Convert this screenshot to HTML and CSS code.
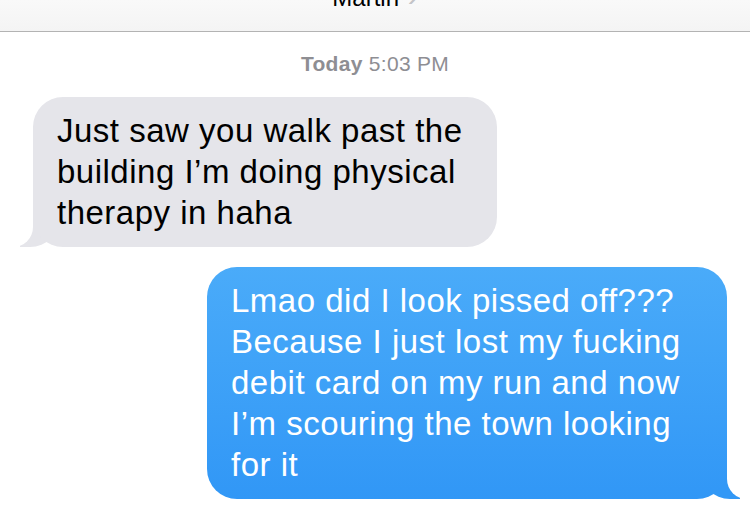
FILE: index.html
```html
<!DOCTYPE html>
<html lang="en">
<head>
    <meta charset="UTF-8">
    <meta name="viewport" content="width=device-width, initial-scale=1.0">
    <title>Martin</title>
    <link rel="stylesheet" href="styles.css">
</head>
<body>

<div class="header">
    <div class="contact">Martin <span class="chevron">&#8250;</span></div>
</div>

<div class="thread">
    <div class="stamp"><b>Today</b> 5:03 PM</div>

    <div class="row them">
        <div class="bubble gray">Just saw you walk past the building I&rsquo;m doing physical therapy in haha</div>
    </div>

    <div class="row me">
        <div class="bubble blue">Lmao did I look pissed off??? Because I just lost my fucking debit card on my run and now I&rsquo;m scouring the town looking for it</div>
    </div>
</div>

</body>
</html>
```

FILE: styles.css
```css
body {
    margin: 0;
    background: #ffffff;
    font-family: 'Liberation Sans', Arial, sans-serif;
    overflow: hidden;
}

.header {
    height: 31px;
    background: linear-gradient(180deg, #f9f9f9, #f4f4f4);
    border-bottom: 1px solid #b3b3b3;
    overflow: hidden;
    display: flex;
    justify-content: center;
}

.contact {
    margin-top: -18px;
    font-size: 24px;
    color: #000;
    line-height: 28px;
}

.chevron {
    color: #c4c4c7;
    font-size: 30px;
    margin-left: 2px;
}

.thread {
    padding-top: 20px;
}

.stamp {
    text-align: center;
    font-size: 21px;
    letter-spacing: 0.3px;
    color: #8e8e93;
    line-height: 24px;
    margin-bottom: 21px;
}

.stamp b {
    font-weight: bold;
}

.row {
    display: flex;
}

.row.them {
    padding-left: 33px;
    margin-bottom: 20px;
}

.row.me {
    justify-content: flex-end;
    padding-right: 23px;
}

.bubble {
    position: relative;
    font-size: 33px;
    letter-spacing: 0.5px;
    line-height: 41px;
    padding: 13px 24px 14px 24px;
    border-radius: 30px;
}

.gray {
    width: 416px;
    background: #e5e5ea;
    color: #000;
}

.blue {
    width: 472px;
    background: linear-gradient(180deg, #4aabf9, #3197f6);
    color: #fff;
}

/* tails */
.gray::before {
    content: "";
    position: absolute;
    bottom: 0;
    left: -13px;
    width: 40px;
    height: 40px;
    background: #e5e5ea;
    border-bottom-right-radius: 30px;
    z-index: -1;
}

.gray::after {
    content: "";
    position: absolute;
    bottom: 0;
    left: -20px;
    width: 20px;
    height: 42px;
    background: #fff;
    border-bottom-right-radius: 20px;
}

.blue::before {
    content: "";
    position: absolute;
    bottom: 0;
    right: -13px;
    width: 40px;
    height: 40px;
    background: #3298f6;
    border-bottom-left-radius: 30px;
    z-index: -1;
}

.blue::after {
    content: "";
    position: absolute;
    bottom: 0;
    right: -20px;
    width: 20px;
    height: 42px;
    background: #fff;
    border-bottom-left-radius: 20px;
}
```
